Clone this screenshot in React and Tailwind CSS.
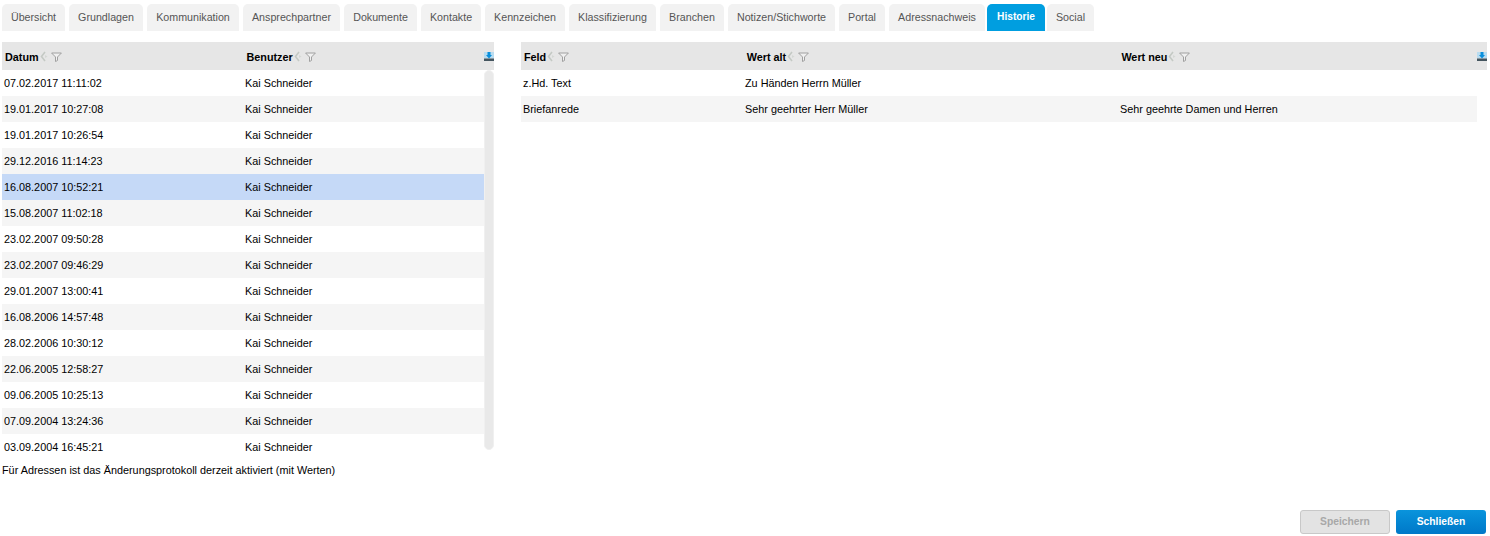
const tabs = [
  ["Übersicht", "w-[63px] mr-1"],
  ["Grundlagen", "w-[74px] mr-1"],
  ["Kommunikation", "w-[92px] mr-1"],
  ["Ansprechpartner", "w-[97px] mr-1"],
  ["Dokumente", "w-[73px] mr-1"],
  ["Kontakte", "w-[60px] mr-1"],
  ["Kennzeichen", "w-[80px] mr-1"],
  ["Klassifizierung", "w-[87px] mr-1"],
  ["Branchen", "w-[64px] mr-1"],
  ["Notizen/Stichworte", "w-[107px] mr-1"],
  ["Portal", "w-[46px] mr-1"],
  ["Adressnachweis", "w-[96px] mr-[2px]"],
  ["Historie", "w-[58px] mr-[2px]", true],
  ["Social", "w-[47px]"],
];

const rows = [
  "07.02.2017 11:11:02", "19.01.2017 10:27:08", "19.01.2017 10:26:54", "29.12.2016 11:14:23",
  "16.08.2007 10:52:21", "15.08.2007 11:02:18", "23.02.2007 09:50:28", "23.02.2007 09:46:29",
  "29.01.2007 13:00:41", "16.08.2006 14:57:48", "28.02.2006 10:30:12", "22.06.2005 12:58:27",
  "09.06.2005 10:25:13", "07.09.2004 13:24:36", "03.09.2004 16:45:21",
];

function SortIcons() {
  return (
    <span className="flex items-center ml-[1px] shrink-0">
      <svg width="9" height="11" viewBox="0 0 9 11">
        <path d="M5 1 L1.5 5.5 L5 10" fill="none" stroke="#c4c9c4" strokeWidth="1.6" />
        <path d="M5 4 L7.5 5.5 L5 7 Z" fill="#d4d8d4" />
      </svg>
      <svg className="ml-[2px]" width="11" height="10" viewBox="0 0 11 10">
        <path d="M0.6 1 H10.4 L6.5 5 V8.5 L4.5 9.5 V5 Z" fill="#f0f0f0" stroke="#a0a0a0" strokeWidth="1" />
      </svg>
    </span>
  );
}

function ExportIcon() {
  return (
    <svg width="10" height="11" viewBox="0 0 10 11" className="shrink-0 ml-[1px]">
      <rect x="0" y="1" width="10" height="6.5" fill="#b9dcf0" />
      <path d="M3.5 1 H6.5 V4 H8 L5 7.5 L2 4 H3.5 Z" fill="#0a8fdc" />
      <rect x="0" y="7.5" width="10" height="2.5" fill="#44555f" />
    </svg>
  );
}

function HeadCell({ label, className }) {
  return (
    <div className={`flex items-center font-bold text-[10.8px] text-black pt-[1px] ${className}`}>
      <span className="pt-[2px]">{label}</span>
      <SortIcons />
    </div>
  );
}

export default function App() {
  return (
    <div
      className="w-[1490px] h-[536px] bg-white overflow-hidden flex flex-col text-[10.83px] text-black"
      style={{ fontFamily: '"Liberation Sans", Arial, sans-serif' }}
    >
      <div className="flex pl-[2px] pt-1 h-[31px] shrink-0">
        {tabs.map(([t, c, active]) => (
          <div
            key={t}
            className={`${c} h-[27px] rounded-t-[5px] flex items-center justify-center pb-[1px] ${
              active ? "bg-[#009ee0] text-white font-bold text-[10.2px]" : "bg-[#f2f2f2] text-[#555555] text-[10.7px]"
            }`}
          >
            {t}
          </div>
        ))}
      </div>

      <div className="flex mt-[11px] h-[412px] shrink-0">
        <div className="w-[492px] ml-[2px] shrink-0">
          <div className="h-[28px] bg-[#e6e6e6] flex items-center overflow-hidden">
            <HeadCell label="Datum" className="w-[242px] pl-[3px]" />
            <HeadCell label="Benutzer" className="w-[240px] pl-[3px]" />
            <ExportIcon />
          </div>
          <div className="flex items-start h-[384px] overflow-hidden">
            <div className="w-[482px] shrink-0">
              {rows.map((d, i) => (
                <div
                  key={d}
                  className={`h-[26px] shrink-0 flex items-center ${
                    i === 4 ? "bg-[#c5d9f7]" : i % 2 === 1 ? "bg-[#f5f5f5]" : "bg-white"
                  }`}
                >
                  <div className="w-[243px] pl-[2px]">{d}</div>
                  <div>Kai Schneider</div>
                </div>
              ))}
            </div>
            <div className="w-[10px] h-[380px] rounded-full bg-[#e9e9e9] border border-[#f0f0f0]" />
          </div>
        </div>

        <div className="w-[966px] ml-[27px] shrink-0">
          <div className="h-[28px] bg-[#e6e6e6] flex items-center overflow-hidden">
            <HeadCell label="Feld" className="w-[223px] pl-[3px]" />
            <HeadCell label="Wert alt" className="w-[375px] pl-[3px]" />
            <HeadCell label="Wert neu" className="w-[358px] pl-[3px]" />
            <ExportIcon />
          </div>
          <div className="w-[956px]">
            <div className="h-[26px] flex items-center bg-white">
              <div className="w-[224px] pl-[2px]">z.Hd. Text</div>
              <div className="w-[375px]">Zu Händen Herrn Müller</div>
              <div />
            </div>
            <div className="h-[26px] flex items-center bg-[#f5f5f5]">
              <div className="w-[224px] pl-[2px]">Briefanrede</div>
              <div className="w-[375px]">Sehr geehrter Herr Müller</div>
              <div>Sehr geehrte Damen und Herren</div>
            </div>
          </div>
        </div>
      </div>

      <div className="pl-[2px] mt-[9px] h-[14px] leading-[14px] shrink-0">
        Für Adressen ist das Änderungsprotokoll derzeit aktiviert (mit Werten)
      </div>

      <div className="flex justify-end gap-[6px] pr-1 mt-[33px]">
        <button className="w-[90px] h-[24px] rounded-[3px] bg-[#e3e3e3] border border-[#c8c8c8] text-[#a8a8a8] font-bold text-[10.3px]">
          Speichern
        </button>
        <button className="w-[90px] h-[24px] rounded-[3px] bg-gradient-to-b from-[#0a94dc] to-[#0078c8] text-white font-bold text-[10.3px]">
          Schließen
        </button>
      </div>
    </div>
  );
}
